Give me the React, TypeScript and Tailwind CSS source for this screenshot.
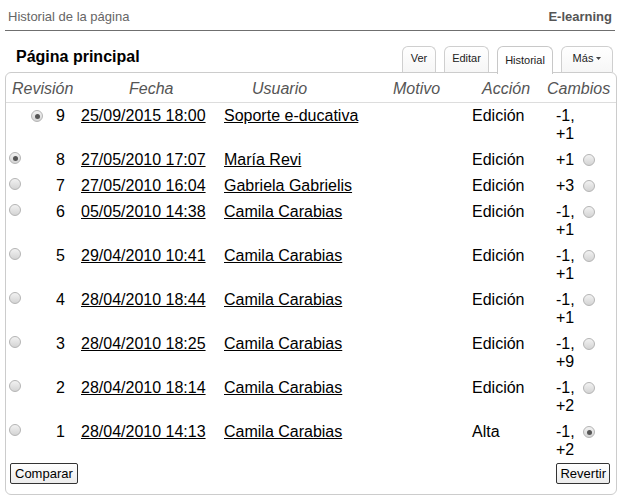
import React from "react";

type Row = {
  rev: number;
  date: string;
  user: string;
  action: string;
  changes: string;
  left: "none" | "on" | "off" | "top";
  right: "none" | "on" | "off";
};

const ROWS: Row[] = [
  { rev: 9, date: "25/09/2015 18:00", user: "Soporte e-ducativa", action: "Edición", changes: "-1, +1", left: "top", right: "none" },
  { rev: 8, date: "27/05/2010 17:07", user: "María Revi", action: "Edición", changes: "+1", left: "on", right: "off" },
  { rev: 7, date: "27/05/2010 16:04", user: "Gabriela Gabrielis", action: "Edición", changes: "+3", left: "off", right: "off" },
  { rev: 6, date: "05/05/2010 14:38", user: "Camila Carabias", action: "Edición", changes: "-1, +1", left: "off", right: "off" },
  { rev: 5, date: "29/04/2010 10:41", user: "Camila Carabias", action: "Edición", changes: "-1, +1", left: "off", right: "off" },
  { rev: 4, date: "28/04/2010 18:44", user: "Camila Carabias", action: "Edición", changes: "-1, +1", left: "off", right: "off" },
  { rev: 3, date: "28/04/2010 18:25", user: "Camila Carabias", action: "Edición", changes: "-1, +9", left: "off", right: "off" },
  { rev: 2, date: "28/04/2010 18:14", user: "Camila Carabias", action: "Edición", changes: "-1, +2", left: "off", right: "off" },
  { rev: 1, date: "28/04/2010 14:13", user: "Camila Carabias", action: "Alta", changes: "-1, +2", left: "off", right: "on" },
];

// column widths taken from the history table
const COLS = "grid grid-cols-[66px_146px_162px_85px_75px_1fr]";

function Radio({ checked }: { checked?: boolean }) {
  return (
    <span className="flex h-[12px] w-[12px] shrink-0 items-center justify-center rounded-full border border-[#b4b4b4] bg-gradient-to-b from-[#f2f2f2] to-[#d4d4d4]">
      {checked && <span className="h-[5px] w-[5px] rounded-full bg-[#555]" />}
    </span>
  );
}

function Tab({ label, active, caret }: { label: string; active?: boolean; caret?: boolean }) {
  return (
    <div
      className={
        active
          ? "relative z-10 -mb-[2px] flex h-[28px] w-[56px] justify-center rounded-t-[6px] border border-b-0 border-[#c8c8c8] bg-white pt-[7px] text-[11px] leading-[13px] text-[#222]"
          : "flex h-[26px] justify-center rounded-t-[6px] border border-b-0 border-[#cfcfcf] bg-gradient-to-b from-white to-[#f6f6f6] pt-[5px] text-[11px] leading-[13px] text-[#222]"
      }
    >
      <span className="flex items-start gap-[3px]">
        {label}
        {caret && (
          <svg width="5" height="3" viewBox="0 0 5 3" className="mt-[5px]">
            <path d="M0 0h5L2.5 3z" fill="#444" />
          </svg>
        )}
      </span>
    </div>
  );
}

export default function App() {
  return (
    <div className="h-[502px] w-[625px] overflow-hidden bg-white font-['Liberation_Sans',Arial,sans-serif] text-black">
      {/* Top bar */}
      <div className="mx-[5px] flex w-[610px] items-start justify-between border-b border-[#6f6f6f] px-[3px] pb-[5px] pt-[9px] text-[13px] leading-[16px]">
        <span className="text-[#666]">Historial de la página</span>
        <span className="font-bold text-[#555]">E-learning</span>
      </div>

      {/* Title + tabs */}
      <div className="flex w-[617px] items-end justify-between pl-[16px] pr-[4px] pt-[15px]">
        <h1 className="pb-[5px] text-[16px] font-bold leading-[20px]">Página principal</h1>
        <div className="flex items-end gap-[8px]">
          <div className="w-[34px]">
            <Tab label="Ver" />
          </div>
          <div className="w-[45px]">
            <Tab label="Editar" />
          </div>
          <Tab label="Historial" active />
          <div className="w-[52px]">
            <Tab label="Más" caret />
          </div>
        </div>
      </div>

      {/* Panel */}
      <div className="ml-[5px] w-[612px] rounded-[6px] border border-[#cccccc] pb-[10px]">
        <div className={`${COLS} border-b border-[#dddddd] pb-[4px] pt-[7px] text-[16px] italic leading-[18px] text-[#555]`}>
          <div className="pl-[6px]">Revisión</div>
          <div className="pl-[57px]">Fecha</div>
          <div className="pl-[34px]">Usuario</div>
          <div className="pl-[13px]">Motivo</div>
          <div className="pl-[17px]">Acción</div>
          <div className="pl-[7px]">Cambios</div>
        </div>

        {ROWS.map((r) => (
          <div key={r.rev} className={`${COLS} py-[4px] text-[16px] leading-[18px]`}>
            <div className="flex items-start justify-between pr-[7px]">
              {r.left === "top" ? (
                <span className="ml-[25px] mt-[3px]">
                  <Radio checked />
                </span>
              ) : (
                <span className="ml-[3px] mt-[1px]">
                  <Radio checked={r.left === "on"} />
                </span>
              )}
              <span>{r.rev}</span>
            </div>
            <div className="pl-[9px]">
              <a className="underline">{r.date}</a>
            </div>
            <div className="pl-[6px]">
              <a className="underline">{r.user}</a>
            </div>
            <div />
            <div className="pl-[7px]">{r.action}</div>
            <div className="flex items-start pl-[16px]">
              <span className="w-[27px]">{r.changes}</span>
              {r.right !== "none" && (
                <span className="mt-[3px]">
                  <Radio checked={r.right === "on"} />
                </span>
              )}
            </div>
          </div>
        ))}

        <div className="flex justify-between pl-[4px] pr-[6px]">
          <button className="h-[21px] rounded-[2px] border border-[#333] bg-gradient-to-b from-white to-[#ececec] px-[4px] text-[13px] leading-[17px] text-black">
            Comparar
          </button>
          <button className="h-[21px] rounded-[2px] border border-[#333] bg-gradient-to-b from-white to-[#ececec] px-[3px] text-[13px] leading-[17px] text-black">
            Revertir
          </button>
        </div>
      </div>
    </div>
  );
}
